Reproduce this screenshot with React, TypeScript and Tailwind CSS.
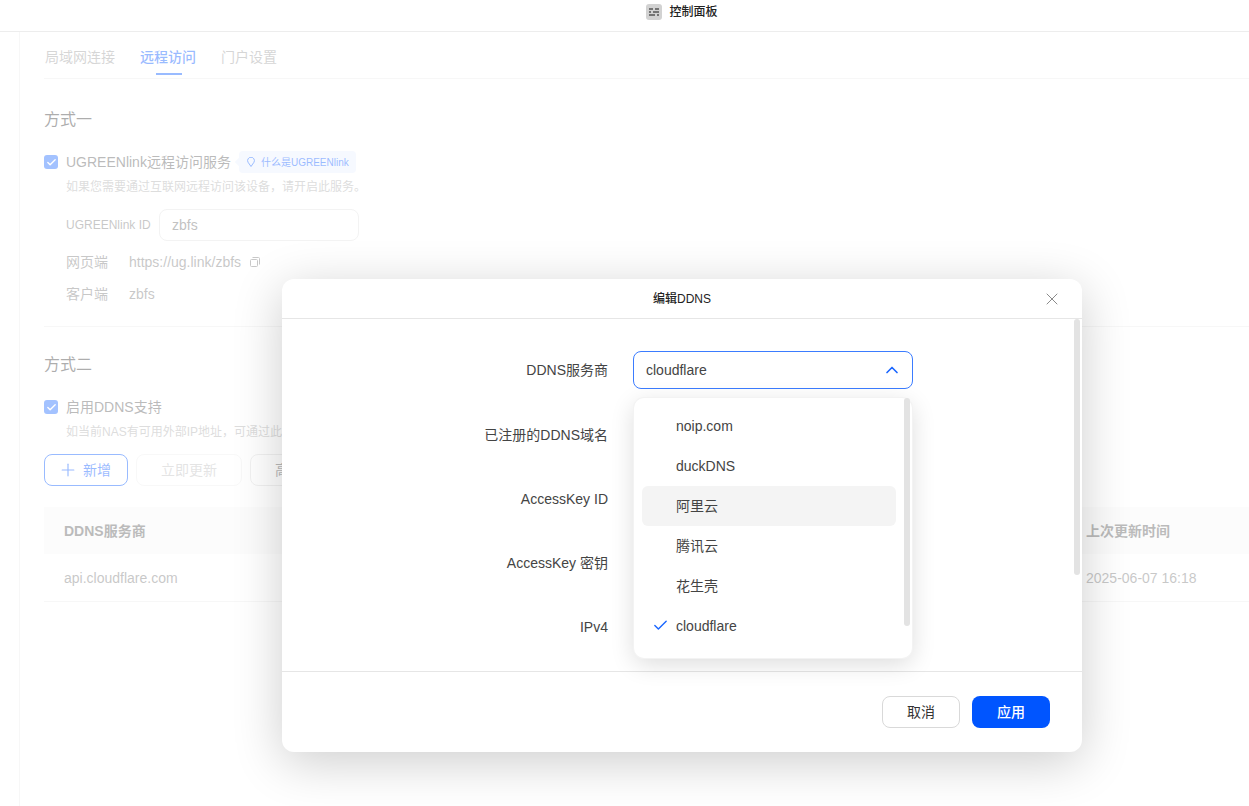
import React from 'react';
import { Check, ChevronUp, Plus, X } from 'lucide-react';

const font = { fontFamily: '"Liberation Sans", "Noto Sans CJK SC", sans-serif' };

const ddnsOptions = ['noip.com', 'duckDNS', '阿里云', '腾讯云', '花生壳', 'cloudflare'];
const formLabels = ['已注册的DDNS域名', 'AccessKey ID', 'AccessKey 密钥', 'IPv4'];

const CheckBox: React.FC = () => (
  <span className="flex h-[14px] w-[14px] shrink-0 items-center justify-center rounded-[3px] bg-[#1a66ff]">
    <Check size={11} strokeWidth={3} className="text-white" />
  </span>
);

const PanelIcon: React.FC = () => (
  <svg width="16" height="16" viewBox="0 0 16 16">
    <rect width="16" height="16" rx="3" fill="#d2d2d2" />
    <path d="M3 5h4M9 5h4M3 8h2M7 8h6M3 11h6M11 11h2" stroke="#555" strokeWidth="1.3" />
  </svg>
);

const App: React.FC = () => {
  return (
    <div className="relative h-screen w-full overflow-hidden bg-white text-[#333]" style={font}>
      <header className="flex h-[32px] items-center justify-center gap-[7px] border-b border-[#ededed] pb-[7px] pl-[115px]">
        <PanelIcon />
        <span className="text-xs font-medium text-[#222]">控制面板</span>
      </header>

      <div className="flex">
        <div className="h-[774px] w-[20px] shrink-0 border-r border-[#ececec]" />
        <main className="min-w-0 flex-1 pl-[24px]">
          <nav className="flex h-[47px] items-start gap-[25px] border-b border-[#ececec] pl-px pt-[15px] text-sm">
            <span className="text-[#999]">局域网连接</span>
            <span className="relative font-medium text-[#0055ff]">
              远程访问
              <span className="absolute -bottom-[8px] left-[16px] h-[2px] w-[26px] bg-[#0055ff]" />
            </span>
            <span className="text-[#999]">门户设置</span>
          </nav>

          <section className="border-b border-[#ececec] pb-[21px]">
            <h2 className="mt-[29px] text-base leading-[24px] text-[#333]">方式一</h2>
            <div className="mt-[19px] flex h-[22px] items-center gap-[8px]">
              <CheckBox />
              <span className="text-sm text-[#555]">UGREENlink远程访问服务</span>
              <span className="relative flex h-[22px] w-[117px] items-center gap-[6px] rounded-[4px] bg-[#e8f0ff] pl-[8px] text-[10px] text-[#0055ff]">
                <span className="absolute -left-[3px] top-[8px] h-[6px] w-[6px] rotate-45 bg-[#e8f0ff]" />
                <svg width="8" height="10" viewBox="0 0 8 10" fill="none" stroke="#0055ff">
                  <path d="M4 9.5 1 5.2A3.4 3.4 0 1 1 7 5.2Z" />
                </svg>
                什么是UGREENlink
              </span>
            </div>
            <p className="mt-[5px] pl-[22px] text-xs leading-[18px] text-[#aaa]">如果您需要通过互联网远程访问该设备，请开启此服务。</p>
            <div className="mt-[13px] flex items-center pl-[22px]">
              <span className="w-[93px] text-xs text-[#777]">UGREENlink ID</span>
              <div className="flex h-[32px] w-[200px] items-center rounded-lg border border-[#e0e0e0] px-[12px] text-sm text-[#666]">zbfs</div>
            </div>
            <div className="mt-[10px] flex h-[22px] items-center pl-[22px] text-sm text-[#777]">
              <span className="w-[63px]">网页端</span>
              <span>https://ug.link/zbfs</span>
              <svg className="ml-[9px]" width="10" height="10" viewBox="0 0 10 10" fill="none" stroke="#777">
                <rect x="0.5" y="2.5" width="7" height="7" rx="1" />
                <path d="M2.5 .5h6a1 1 0 0 1 1 1v6" />
              </svg>
            </div>
            <div className="mt-[10px] flex h-[22px] items-center pl-[22px] text-sm text-[#777]">
              <span className="w-[63px]">客户端</span>
              <span>zbfs</span>
            </div>
          </section>

          <section>
            <h2 className="mt-[26px] text-base leading-[24px] text-[#333]">方式二</h2>
            <div className="mt-[19px] flex h-[22px] items-center gap-[8px]">
              <CheckBox />
              <span className="text-sm text-[#555]">启用DDNS支持</span>
            </div>
            <p className="mt-[5px] pl-[22px] text-xs leading-[18px] text-[#aaa]">如当前NAS有可用外部IP地址，可通过此方式访问</p>
            <div className="mt-[13px] flex gap-[8px] text-sm">
              <button className="flex h-[32px] w-[84px] items-center gap-[5px] rounded-lg border border-[#0055ff] pl-[13px] text-[#0055ff]">
                <Plus size={20} strokeWidth={1.4} />
                新增
              </button>
              <button className="h-[32px] w-[106px] rounded-lg border border-[#eee] text-[#bbb]">立即更新</button>
              <button className="h-[32px] w-[106px] rounded-lg border border-[#ddd] text-[#555]">高级设置</button>
            </div>
            <div className="mt-[21px] flex h-[47px] items-center bg-[#f7f7f7] text-sm font-bold text-[#555]">
              <span className="ml-[20px] w-[1022px]">DDNS服务商</span>
              <span className="whitespace-nowrap">上次更新时间</span>
            </div>
            <div className="flex h-[48px] items-center border-b border-[#ececec] text-sm text-[#777]">
              <span className="ml-[20px] w-[1022px]">api.cloudflare.com</span>
              <span className="whitespace-nowrap">2025-06-07 16:18</span>
            </div>
          </section>
        </main>
      </div>

      {/* page is dimmed behind the dialog */}
      <div className="absolute inset-x-0 bottom-0 top-[32px] bg-white/60" />

      <div className="absolute left-[282px] top-[279px] flex h-[473px] w-[800px] flex-col rounded-xl bg-white shadow-[0_10px_50px_rgba(0,0,0,0.2)]">
        <div className="relative flex h-[40px] shrink-0 items-center justify-center border-b border-[#e6e6e6] pt-px text-xs font-medium text-[#222]">
          编辑DDNS
          <X size={20} strokeWidth={1.2} className="absolute right-[20px] top-[10px] text-[#8a8a8a]" />
        </div>

        <div className="relative flex-1 overflow-hidden pt-[32px]">
          <div className="mb-[27px] flex h-[38px] items-center">
            <span className="w-[326px] text-right text-sm text-[#444]">DDNS服务商</span>
            <div className="ml-[25px] flex h-[38px] w-[280px] items-center justify-between rounded-lg border border-[#3b7cff] pl-[12px] pr-[10px] text-sm text-[#444]">
              cloudflare
              <ChevronUp size={20} strokeWidth={2} className="text-[#1a66ff]" />
            </div>
          </div>
          {formLabels.map((label) => (
            <div key={label} className="mb-[26px] flex h-[38px] items-center">
              <span className="w-[326px] text-right text-sm text-[#444]">{label}</span>
            </div>
          ))}
          <div className="absolute right-[2px] top-0 h-[256px] w-[6px] rounded-full bg-[#e3e3e3]" />
        </div>

        <div className="flex h-[81px] shrink-0 items-center justify-end gap-[12px] border-t border-[#e6e6e6] pr-[32px] text-sm">
          <button className="h-[32px] w-[78px] rounded-lg border border-[#d9d9d9] text-[#333]">取消</button>
          <button className="h-[32px] w-[78px] rounded-lg bg-[#0055ff] font-medium text-white">应用</button>
        </div>

        {/* open select menu */}
        <div className="absolute left-[352px] top-[119px] h-[260px] w-[278px] rounded-[10px] bg-white py-[8px] pl-[8px] pr-[16px] shadow-[0_0_0_1px_#f3f3f3,0_6px_24px_rgba(0,0,0,0.14)]">
          {ddnsOptions.map((option) => (
            <div
              key={option}
              className={`relative flex h-[40px] items-center rounded-md pl-[34px] text-sm text-[#444] ${option === '阿里云' ? 'bg-[#f4f4f4]' : ''}`}
            >
              {option === 'cloudflare' && <Check size={17} strokeWidth={2} className="absolute left-[10px] top-[11px] text-[#1a66ff]" />}
              {option}
            </div>
          ))}
          <div className="absolute right-[2px] top-0 h-[228px] w-[6px] rounded-full bg-[#e3e3e3]" />
        </div>
      </div>
    </div>
  );
};

export default App;
